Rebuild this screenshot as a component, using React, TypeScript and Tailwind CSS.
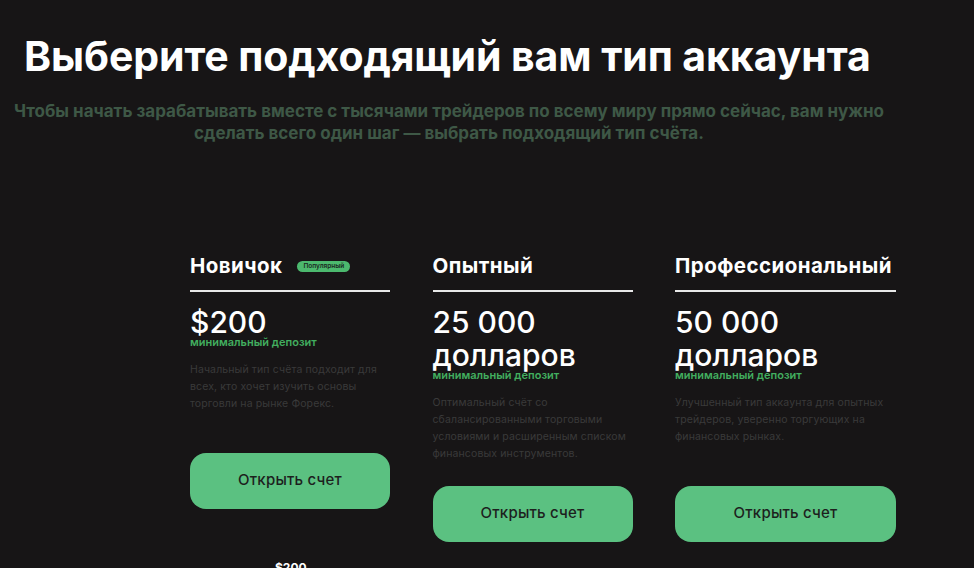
import React from "react";

type Plan = {
  title: string;
  badge?: string;
  price: string[];
  desc: string[];
  width: string;
};

const plans: Plan[] = [
  {
    title: "Новичок",
    badge: "Популярный",
    price: ["$200"],
    desc: ["Начальный тип счёта подходит для", "всех, кто хочет изучить основы", "торговли на рынке Форекс."],
    width: "w-[200px]",
  },
  {
    title: "Опытный",
    price: ["25 000", "долларов"],
    desc: [
      "Оптимальный счёт со",
      "сбалансированными торговыми",
      "условиями и расширенным списком",
      "финансовых инструментов.",
    ],
    width: "w-[200px]",
  },
  {
    title: "Профессиональный",
    price: ["50 000", "долларов"],
    desc: ["Улучшенный тип аккаунта для опытных", "трейдеров, уверенно торгующих на", "финансовых рынках."],
    width: "w-[221px]",
  },
];

function Card({ plan }: { plan: Plan }) {
  return (
    <div className={`${plan.width} flex flex-col`}>
      <div className="flex items-center h-[28px]">
        <span className="text-[20.5px] leading-[28px] font-bold text-white tracking-[0.45px] whitespace-nowrap">
          {plan.title}
        </span>
        {plan.badge && (
          <span className="ml-[15px] h-[11px] px-[6px] rounded-full bg-[#4cb96e] text-[#1a2a1f] text-[6.5px] leading-[11px] font-semibold">
            {plan.badge}
          </span>
        )}
      </div>
      <div className="mt-[10px] h-[1.5px] bg-[#e8e8e8]" />
      <div className="mt-[14px] text-[30px] leading-[33px] font-medium text-white">
        {plan.price.map((p, i) => (
          <div key={p} className={i === plan.price.length - 1 ? "h-[29px]" : "h-[33px]"}>
            {p}
          </div>
        ))}
      </div>
      <div className="text-[11px] leading-[14px] font-semibold text-[#42ae5f] whitespace-nowrap">
        минимальный депозит
      </div>
      <div className="mt-[12px] min-h-[68px] text-[10.5px] leading-[17px] text-[#3a3a3a] tracking-[0.12px] whitespace-nowrap">
        {plan.desc.map((d) => (
          <div key={d}>{d}</div>
        ))}
      </div>
      <button className="mt-[24px] h-[56px] w-full rounded-[16px] bg-[#5bc181] text-[#1d1f1e] text-[15px] font-medium tracking-[0.2px]">
        Открыть счет
      </button>
    </div>
  );
}

export default function App() {
  return (
    <div
      className="w-[974px] h-[568px] overflow-hidden bg-[#171516]"
      style={{ fontFamily: "Inter, 'Noto Sans', sans-serif" }}
    >
      <h1 className="pt-[31px] pl-[24px] text-[41px] leading-[50px] font-bold text-white whitespace-nowrap tracking-[-0.1px]">
        Выберите подходящий вам тип аккаунта
      </h1>
      <p className="mt-[19px] w-[898px] text-center text-[17px] leading-[22px] font-bold text-[#3e5846] whitespace-nowrap">
        Чтобы начать зарабатывать вместе с тысячами трейдеров по всему миру прямо сейчас, вам нужно
        <br />
        сделать всего один шаг — выбрать подходящий тип счёта.
      </p>
      <div className="mt-[108px] pl-[190px] flex items-start gap-[42.5px]">
        {plans.map((p) => (
          <Card key={p.title} plan={p} />
        ))}
      </div>
      <div className="mt-[18px] ml-[275px] text-[12px] leading-[16px] font-bold text-white">
        $200
      </div>
    </div>
  );
}
